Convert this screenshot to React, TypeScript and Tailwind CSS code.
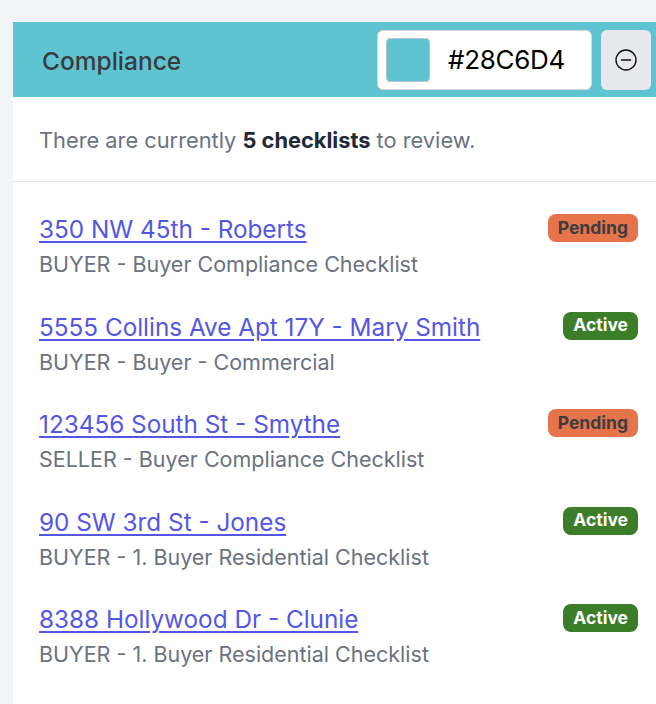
import React from 'react';

const checklists = [
  { id: 1, title: '350 NW 45th - Roberts', sub: 'BUYER - Buyer Compliance Checklist', status: 'Pending' },
  { id: 2, title: '5555 Collins Ave Apt 17Y - Mary Smith', sub: 'BUYER - Buyer - Commercial', status: 'Active' },
  { id: 3, title: '123456 South St - Smythe', sub: 'SELLER - Buyer Compliance Checklist', status: 'Pending' },
  { id: 4, title: '90 SW 3rd St - Jones', sub: 'BUYER - 1. Buyer Residential Checklist', status: 'Active' },
  { id: 5, title: '8388 Hollywood Dr - Clunie', sub: 'BUYER - 1. Buyer Residential Checklist', status: 'Active' },
];

function MinusCircle() {
  return (
    <svg width="24" height="24" viewBox="0 0 24 24" fill="none" stroke="#111" strokeWidth="1.4">
      <circle cx="12" cy="12" r="10" />
      <path d="M7.5 12h9" strokeLinecap="round" />
    </svg>
  );
}

export default function App() {
  return (
    <div
      className="h-screen w-full bg-[#f3f4f6] pt-[22px] pl-[13px] overflow-hidden"
      style={{ fontFamily: 'Inter, "Noto Sans", sans-serif' }}
    >
      <div className="w-[700px] bg-white pb-[40px]">
        {/* Header */}
        <div className="h-[75px] bg-[#5fc4d1] flex items-center pl-[29px]">
          <h2 className="text-[24.5px] font-medium text-[#3b3b3b] flex-1 pt-[3px]">Compliance</h2>
          <div className="flex items-center gap-[9px] mr-[62px]">
            <div className="w-[215px] h-[60px] bg-white rounded-md border border-[#d8d8d8] flex items-center pl-[8px]">
              <div className="w-[44px] h-[44px] rounded-[4px] bg-[#5fc4d1] border border-[#b9c4c6]" />
              <span className="ml-[18px] text-[26px] text-black tracking-[-0.3px]">#28C6D4</span>
            </div>
            <button className="w-[50px] h-[60px] rounded-md bg-[#e8e9ed] flex items-center justify-center">
              <MinusCircle />
            </button>
          </div>
        </div>

        {/* Summary */}
        <div className="h-[85px] flex items-center pl-[26px] pt-[2px] border-b border-[#e5e7eb]">
          <p className="text-[21.8px] text-[#6b7280]">
            There are currently <span className="font-bold text-[#1f2937]">5 checklists</span> to review.
          </p>
        </div>

        {/* List */}
        <div className="pt-[29px]">
          {checklists.map((item) => (
            <div key={item.id} className="h-[97.5px] flex items-start pl-[26px] pr-[75px]">
              <div className="flex-1">
                <a href="#" className="text-[24.3px] leading-[36px] text-[#5457e4] underline underline-offset-[3px]">
                  {item.title}
                </a>
                <p className="text-[21.5px] leading-[35px] text-[#6b7280]">{item.sub}</p>
              </div>
              <span
                className={
                  item.status === 'Pending'
                    ? 'mt-[3px] h-[28px] px-[10px] flex items-center rounded-lg bg-[#e5744b] text-[#3d3d40] text-[17.5px] font-bold'
                    : 'mt-[3px] h-[28px] px-[10px] flex items-center rounded-lg bg-[#3b7d28] text-white text-[17.5px] font-bold'
                }
              >
                {item.status}
              </span>
            </div>
          ))}
        </div>
      </div>
    </div>
  );
}
